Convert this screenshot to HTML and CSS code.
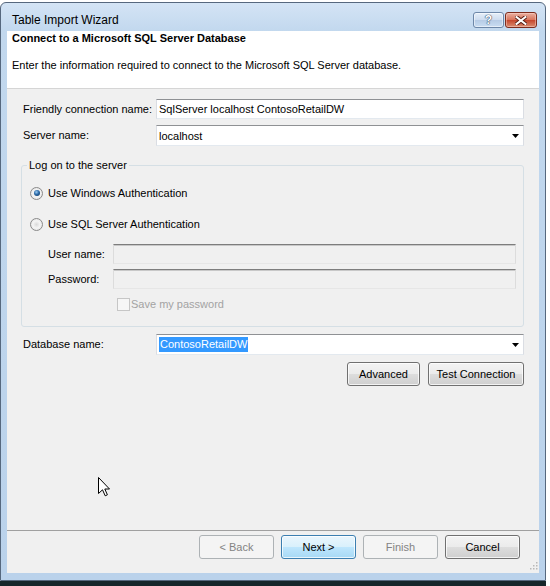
FILE: index.html
```html
<!DOCTYPE html>
<html>
<head>
<meta charset="utf-8">
<title>Table Import Wizard</title>
<link rel="stylesheet" href="styles.css">
</head>
<body>
<div class="window">
  <div class="titlebar">
    <span class="title">Table Import Wizard</span>
    <div class="caps">
      <div class="cap help">?</div>
      <div class="cap close">
        <svg width="12" height="9" viewBox="0 0 12 9"><path d="M1.5 1L10.5 8M10.5 1L1.5 8" stroke="#5a1f14" stroke-width="4" stroke-linecap="square"/><path d="M1.5 1L10.5 8M10.5 1L1.5 8" stroke="#fff" stroke-width="2" stroke-linecap="square"/></svg>
      </div>
    </div>
  </div>
  <div class="client">
    <div class="header">
      <div class="h-title">Connect to a Microsoft SQL Server Database</div>
      <div class="h-desc">Enter the information required to connect to the Microsoft SQL Server database.</div>
    </div>
    <div class="form">
      <div class="row">
        <label class="lbl">Friendly connection name:</label>
        <div class="textbox">SqlServer localhost ContosoRetailDW</div>
      </div>
      <div class="row row-gap">
        <label class="lbl">Server name:</label>
        <div class="combo"><span>localhost</span><svg class="arrow" width="7" height="4" viewBox="0 0 7 4"><path d="M0 0H7L3.5 4Z" fill="#000"/></svg></div>
      </div>
      <fieldset class="group">
        <legend>Log on to the server</legend>
        <div class="opt"><span class="radio on"></span>Use Windows Authentication</div>
        <div class="opt opt-next"><span class="radio"></span>Use SQL Server Authentication</div>
        <div class="cred cred-first"><label class="clbl">User name:</label><div class="textbox disabled"></div></div>
        <div class="cred cred-next"><label class="clbl">Password:</label><div class="textbox disabled"></div></div>
        <div class="checkrow"><span class="check"></span>Save my password</div>
      </fieldset>
      <div class="row db-row">
        <label class="lbl">Database name:</label>
        <div class="combo"><span class="sel">ContosoRetailDW</span><svg class="arrow" width="7" height="4" viewBox="0 0 7 4"><path d="M0 0H7L3.5 4Z" fill="#000"/></svg></div>
      </div>
      <div class="actions">
        <button class="btn adv">Advanced</button>
        <button class="btn test">Test Connection</button>
      </div>
    </div>
    <div class="footer">
      <button class="btn nav" disabled>&lt; Back</button>
      <button class="btn nav default">Next &gt;</button>
      <button class="btn nav" disabled>Finish</button>
      <button class="btn nav">Cancel</button>
    </div>
    <svg class="grip" width="10" height="10" viewBox="0 0 10 10">
      <rect x="8" y="1" width="1.5" height="1.5" fill="#b8b8b8"/>
      <rect x="5" y="4" width="1.5" height="1.5" fill="#b8b8b8"/>
      <rect x="8" y="4" width="1.5" height="1.5" fill="#b8b8b8"/>
      <rect x="2" y="7" width="1.5" height="1.5" fill="#b8b8b8"/>
      <rect x="5" y="7" width="1.5" height="1.5" fill="#b8b8b8"/>
      <rect x="8" y="7" width="1.5" height="1.5" fill="#b8b8b8"/>
    </svg>
  </div>
</div>
<div class="desk"></div>
<svg class="cursor" width="13" height="20" viewBox="0 0 13 20">
  <path d="M0.5 0.5V16.5L4.5 12.8L7.2 18.8L9.4 17.8L6.8 12H11.5Z" fill="#fff" stroke="#000" stroke-width="1" stroke-linejoin="miter"/>
</svg>
</body>
</html>
```

FILE: styles.css
```css
* { box-sizing: border-box; }
html, body { margin: 0; padding: 0; }
body {
  width: 550px;
  height: 586px;
  background: #fff;
  font-family: "Liberation Sans", Arial, sans-serif;
  font-size: 11px;
  color: #000;
  position: relative;
  overflow: hidden;
}

.window {
  margin-top: 2px;
  width: 546px;
  height: 579px;
  border: 1px solid #56687e;
  border-radius: 6px 6px 0 0;
  background: linear-gradient(#d4e4f5 0, #c2d8ee 28px, #bad2eb 100%);
  padding: 0 6px 7px 6px;
  display: flex;
  flex-direction: column;
  position: relative;
}

.titlebar {
  height: 28px;
  flex: none;
  display: flex;
  align-items: flex-start;
  margin: 0 -6px;
  padding: 0 8px 0 11px;
}
.title {
  font-size: 12px;
  line-height: 14px;
  margin-top: 10px;
  color: #000;
}
.caps {
  margin-left: auto;
  margin-top: 9px;
  display: flex;
  gap: 1px;
}
.cap {
  height: 16px;
  border-radius: 3px;
  display: flex;
  align-items: center;
  justify-content: center;
}
.help {
  width: 31px;
  border: 1px solid #6d87a8;
  background: linear-gradient(#e6eff9 0%, #cddcef 50%, #b6cbe5 51%, #c9ddf2 100%);
  box-shadow: inset 0 0 0 1px rgba(255,255,255,0.5);
  color: #fff;
  font-weight: bold;
  font-size: 12px;
  line-height: 14px;
  text-shadow: 0 0 1px #3b4f68, 0 0 1px #3b4f68, 0 0 1px #3b4f68;
}
.close {
  width: 32px;
  border: 1px solid #7d2c1d;
  background: linear-gradient(#eab1a2 0%, #d9745b 50%, #c5452b 51%, #d98c70 100%);
  box-shadow: inset 0 0 0 1px rgba(255,220,210,0.45);
}

.client {
  flex: 1;
  background: #f0f0f0;
  display: flex;
  flex-direction: column;
  position: relative;
}

.header {
  height: 58px;
  flex: none;
  background: #fff;
  border-bottom: 1px solid #d5d5d5;
  padding: 1px 5px 0 5px;
}
.h-title {
  font-weight: bold;
  line-height: 13px;
}
.h-desc {
  line-height: 13px;
  margin-top: 14px;
}

.form {
  padding: 10px 15px 0 16px;
  display: flex;
  flex-direction: column;
}
.row {
  display: flex;
  align-items: center;
}
.row-gap { margin-top: 6px; }
.lbl {
  width: 133px;
  flex: none;
  line-height: 13px;
}
.textbox {
  flex: 1;
  height: 20px;
  border: 1px solid;
  border-color: #8f9194 #dadde3 #e3e9ef #dadde3;
  background: #fff;
  padding-left: 2px;
  line-height: 18px;
  white-space: nowrap;
}
.textbox.disabled {
  background: #f0f0f0;
  border-color: #7d7d7d #dcdcdc #e6e6e6 #dcdcdc;
  box-shadow: inset 0 1px 0 #c8c8c8;
}
.combo {
  flex: 1;
  height: 21px;
  border: 1px solid;
  border-color: #8f9194 #dadde3 #e3e9ef #dadde3;
  background: #fff;
  display: flex;
  align-items: center;
  padding-left: 2px;
}
.arrow {
  margin-left: auto;
  margin-right: 4px;
  flex: none;
}
.sel {
  background: #3399ff;
  color: #fff;
  line-height: 15px;
  padding: 0 1px;
}

.group {
  margin: 13px 0 0 -2px;
  padding: 13px 7px 14px 8px;
  border: 1px solid #d5dfe5;
  border-radius: 3px;
  min-width: 0;
}
.group legend {
  padding: 0 2px;
  margin-left: -3px;
  line-height: 13px;
}
.opt {
  display: flex;
  align-items: center;
  height: 16px;
  line-height: 13px;
}
.opt-next { margin-top: 15px; }
.radio {
  width: 13px;
  height: 13px;
  flex: none;
  border-radius: 50%;
  border: 1px solid #8a8a8a;
  background: radial-gradient(circle at 50% 50%, #d9d9d9 0, #f4f4f4 45%, #dcdcdc 100%);
  margin-right: 5px;
  position: relative;
}
.radio.on::after {
  content: "";
  position: absolute;
  left: 2.5px;
  top: 2.5px;
  width: 6px;
  height: 6px;
  border-radius: 50%;
  background: radial-gradient(circle at 40% 35%, #9ccbf2 0, #2a6aa8 45%, #0f2f56 100%);
}
.cred {
  display: flex;
  align-items: center;
}
.cred-first { margin-top: 12px; }
.cred-next { margin-top: 5px; }
.clbl {
  width: 65px;
  margin-left: 18px;
  flex: none;
  line-height: 13px;
}
.checkrow {
  margin-top: 7px;
  height: 16px;
  display: flex;
  align-items: center;
  padding-left: 87px;
  color: #a3a3a3;
  line-height: 13px;
}
.check {
  width: 13px;
  height: 13px;
  flex: none;
  border: 1px solid #c6c6c6;
  background: #f6f6f6;
  margin-right: 1px;
}

.db-row { margin-top: 7px; }

.actions {
  margin-top: 7px;
  display: flex;
  justify-content: flex-end;
  gap: 8px;
}

.btn {
  height: 24px;
  border: 1px solid #707070;
  border-radius: 3px;
  background: linear-gradient(#f3f3f3 0%, #ebebeb 50%, #dddddd 51%, #cfcfcf 100%);
  box-shadow: inset 0 0 0 1px rgba(255,255,255,0.75);
  font-family: inherit;
  font-size: 11px;
  color: #000;
  padding: 0;
}
.adv { width: 73px; }
.test { width: 96px; }
.nav { width: 75px; }
.btn.default {
  border-color: #3c7fb1;
  background: linear-gradient(#eaf6fd 0%, #d9f0fc 50%, #bee6fd 51%, #a7d9f5 100%);
}
.btn:disabled {
  border-color: #adb2b5;
  background: #f4f4f4;
  color: #838383;
  box-shadow: none;
}

.footer {
  margin-top: auto;
  border-top: 1px solid #a0a0a0;
  padding: 4px 19px 14px 0;
  display: flex;
  justify-content: flex-end;
  gap: 7px;
}

.grip {
  position: absolute;
  right: 1px;
  bottom: 2px;
}

.desk {
  width: 546px;
  height: 5px;
  background: #16262a;
}

.cursor {
  position: absolute;
  left: 98px;
  top: 477px;
}
```
